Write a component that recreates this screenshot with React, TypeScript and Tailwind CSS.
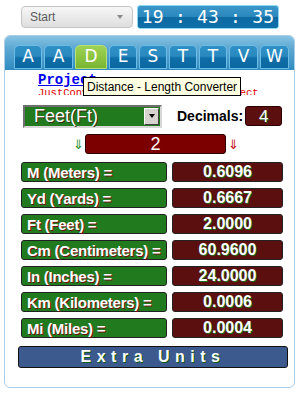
import React from "react";

const tabs = [
  { l: "A", w: "w-[28px]" },
  { l: "A", w: "w-[29px]" },
  { l: "D", w: "w-[32px]", active: true },
  { l: "E", w: "w-[28px]" },
  { l: "S", w: "w-[28px]" },
  { l: "T", w: "w-[28px]" },
  { l: "T", w: "w-[28px]" },
  { l: "V", w: "w-[29px]" },
  { l: "W", w: "w-[29px]" },
];

const rows = [
  ["M (Meters) =", "0.6096"],
  ["Yd (Yards) =", "0.6667"],
  ["Ft (Feet) =", "2.0000"],
  ["Cm (Centimeters) =", "60.9600"],
  ["In (Inches) =", "24.0000"],
  ["Km (Kilometers) =", "0.0006"],
  ["Mi (Miles) =", "0.0004"],
];

export default function App() {
  return (
    <div className="relative w-[299px] h-[393px] bg-white overflow-hidden font-['Liberation_Sans',Arial,sans-serif]">
      {/* top bar */}
      <div className="flex items-center pt-[5px] h-[29px]">
        <div className="ml-[21px] w-[112px] h-[22px] rounded-[4px] border border-[#c6c6c6] bg-gradient-to-b from-[#f7f7f7] to-[#dedede] flex items-center justify-between pl-[8px] pr-[9px]">
          <span className="text-[12px] text-[#5a5a5a]">Start</span>
          <span className="w-0 h-0 border-l-[3px] border-r-[3px] border-t-[4px] border-l-transparent border-r-transparent border-t-[#8a8a8a]"></span>
        </div>
        <div className="ml-[4px] w-[142px] h-[24px] rounded-[3px] border border-[#8fd6f2] bg-[linear-gradient(to_bottom,#3c97c9_0%,#2a88bd_48%,#0d6aa2_52%,#0f6fa8_100%)] flex items-center justify-center">
          <span className="font-['DejaVu_Sans_Mono',monospace] text-[18px] leading-none text-white tracking-[0.2px]">19 : 43 : 35</span>
        </div>
      </div>

      {/* panel */}
      <div className="mx-[4px] mt-[6px] w-[291px] h-[353px] rounded-[6px] border border-[#a9cde6] bg-white flex flex-col overflow-hidden">
        {/* header with tabs */}
        <div className="h-[34px] bg-[linear-gradient(to_bottom,#86c3e2_0%,#5fa9d3_35%,#2f8bc0_100%)] flex items-end pl-[9px] pb-[1px]">
          <div className="flex gap-[2px]">
            {tabs.map((t, i) => (
              <div
                key={i}
                className={
                  t.w +
                  " h-[24px] rounded-t-[5px] border flex items-center justify-center text-white text-[17px] font-['DejaVu_Sans',sans-serif] " +
                  (t.active
                    ? "border-[#b5e07a] bg-[linear-gradient(to_bottom,#9fd155_0%,#8cc440_50%,#7ab533_100%)]"
                    : "border-[#6cbde6] bg-[linear-gradient(to_bottom,#2f90c6_0%,#2a8ac0_45%,#0f6ea8_55%,#0b67a0_100%)]")
                }
              >
                {t.l}
              </div>
            ))}
          </div>
        </div>

        {/* content */}
        <div className="flex flex-col">
          <div className="h-[25px] overflow-hidden pl-[33px] pt-[3px] leading-none">
            <div className="font-['Liberation_Mono',monospace] font-bold text-[14px] text-[#0000ee] underline leading-[14px]">Project</div>
            <div className="font-['Liberation_Mono',monospace] text-[10.5px] text-[#dd0000] leading-[12px] whitespace-nowrap">JustConverter.com Converter Project</div>
          </div>

          <div className="flex items-center mt-[9px] h-[24px]">
            <div className="ml-[18px] w-[139px] h-[23px] border-2 border-[#6e6e6e] border-r-[#d8d8d8] border-b-[#d8d8d8] bg-[#227a1f] flex items-center">
              <span className="flex-1 pl-[9px] text-[18px] text-white leading-none [text-shadow:1px_1px_0_#3a2a10]">Feet(Ft)</span>
              <span className="w-[15px] h-[17px] mr-[1px] bg-[#d6d3ce] border border-[#ffffff] border-r-[#404040] border-b-[#404040] flex items-center justify-center">
                <span className="w-0 h-0 border-l-[3px] border-r-[3px] border-t-[4px] border-l-transparent border-r-transparent border-t-black"></span>
              </span>
            </div>
            <span className="ml-[15px] text-[14px] font-bold text-black">Decimals:</span>
            <div className="ml-[2px] w-[37px] h-[20px] rounded-[3px] border border-[#2a0000] bg-[#5c0f0f] flex items-center justify-center text-[17px] text-white leading-none [text-shadow:1px_1px_0_#1f6b1f]">4</div>
          </div>

          <div className="flex items-center mt-[6px] h-[20px] ml-[68px]">
            <span className="text-[13px] text-[#1b8a1b] leading-none">⇓</span>
            <div className="ml-[1px] w-[141px] h-[20px] rounded-[3px] border border-[#2a0000] bg-[#7c0000] flex items-center justify-center text-[18px] text-white leading-none">2</div>
            <span className="ml-[2px] text-[13px] text-[#c00000] leading-none">⇓</span>
          </div>

          <div className="flex flex-col gap-[6px] mt-[8px] ml-[16px]">
            {rows.map(([a, b], i) => (
              <div key={i} className="flex gap-[5px] h-[20px]">
                <div className="w-[146px] h-[20px] rounded-[3px] border border-[#222] bg-[#227a1f] flex items-center pl-[5px] text-[15px] font-bold text-white leading-none whitespace-nowrap tracking-[-0.25px] [text-shadow:1px_1px_0_#6a1010]">
                  {a}
                </div>
                <div className="w-[111px] h-[20px] rounded-[3px] border border-[#222] bg-[#5c0f0f] flex items-center justify-center text-[16px] font-bold text-white leading-none [text-shadow:1px_1px_0_#1f6b1f]">
                  {b}
                </div>
              </div>
            ))}
          </div>

          <div className="mt-[8px] ml-[13px] w-[270px] h-[22px] rounded-[3px] border border-[#111] bg-[#3d5a8e] flex items-center justify-center text-[16px] font-bold text-white tracking-[5.5px] leading-none [text-shadow:1px_1px_0_#0d5a0d]">
            Extra Units
          </div>
        </div>
      </div>

      {/* tooltip */}
      <div className="absolute left-[83px] top-[77px] h-[19px] px-[3px] border border-black bg-[#ffffe1] flex items-center text-[12px] text-black leading-none whitespace-nowrap">
        Distance - Length Converter
      </div>
    </div>
  );
}
